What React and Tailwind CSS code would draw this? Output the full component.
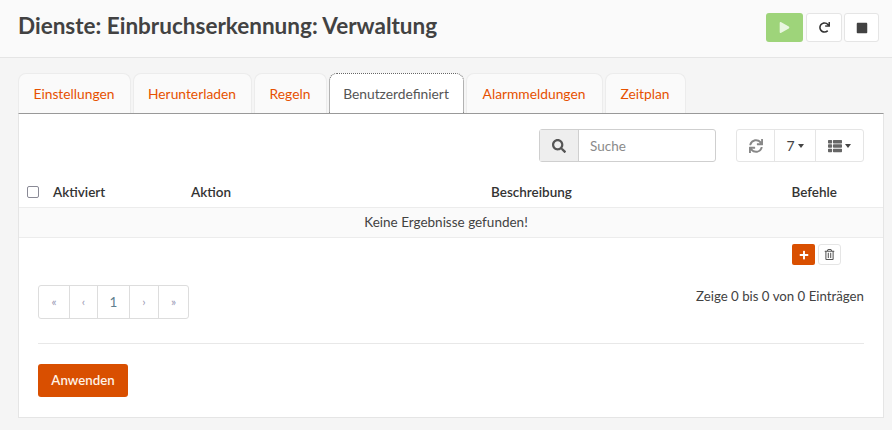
import React from "react";
import { FaPlay, FaRedo, FaStop, FaSearch, FaSync, FaThList, FaPlus, FaRegTrashAlt } from "react-icons/fa";

const tabs = [
  ["Einstellungen", "w-[113px]", false],
  ["Herunterladen", "w-[119px] ml-[2px]", false],
  ["Regeln", "w-[73px] ml-[2px]", false],
  ["Benutzerdefiniert", "w-[135px] ml-[2px]", true],
  ["Alarmmeldungen", "w-[137px] ml-[2px]", false],
  ["Zeitplan", "w-[81px] ml-[2px]", false],
];

const Caret = () => (
  <span className="ml-[3px] inline-block h-0 w-0 border-x-[3.5px] border-t-[4px] border-x-transparent border-t-[#444]" />
);

export default function App() {
  return (
    <div className="h-[430px] w-[892px] overflow-hidden bg-[#f5f5f5] font-['Lato','Liberation_Sans',sans-serif] text-[14px] text-[#424242]">
      <header className="flex h-[58px] items-start justify-between border-b border-[#e5e5e5] bg-[#fafafa] pl-[18px] pr-[13px]">
        <h1 className="mt-[11px] text-[22.5px] leading-[30px] font-bold text-[#424242]">
          Dienste: Einbruchserkennung: Verwaltung
        </h1>
        <div className="mt-[13px] flex">
          <button className="flex h-[29px] w-[37px] items-center justify-center rounded-[3px] bg-[#9ed47a] text-[#e9f6e0]">
            <FaPlay size={11} />
          </button>
          <button className="ml-[3px] flex h-[29px] w-[36px] items-center justify-center rounded-[3px] border border-[#e5e5e5] bg-white text-[#333]">
            <FaRedo size={11} />
          </button>
          <button className="ml-[2px] flex h-[29px] w-[35px] items-center justify-center rounded-[3px] border border-[#e5e5e5] bg-white text-[#424242]">
            <FaStop size={12} />
          </button>
        </div>
      </header>

      <main className="ml-[18px] mr-[8px] mt-[15px]">
        <nav className="flex h-[40px] items-stretch text-[13.8px]">
          {tabs.map(([label, w, active]) => (
            <div
              key={label}
              className={
                active
                  ? `${w} flex items-center justify-center rounded-t-[8px] border border-b-0 border-dotted border-[#666] bg-white pt-[2px] pr-[1px] text-[#555]`
                  : `${w} flex items-center justify-center rounded-t-[8px] border border-b-0 border-[#ececec] bg-[#fafafa] pt-[2px] pr-[1px] text-[#e65100]`
              }
            >
              {label}
            </div>
          ))}
        </nav>

        <section className="h-[305px] border border-t-[#999] border-x-[#e5e5e5] border-b-[#e5e5e5] bg-white">
          <div className="flex justify-end pr-[19px] pt-[15px]">
            <div className="flex h-[33px] w-[177px] rounded-[3px] border border-[#cfcfcf]">
              <span className="flex w-[39px] items-center justify-center border-r border-[#cfcfcf] bg-[#eee] text-[#555]">
                <FaSearch size={14} />
              </span>
              <span className="flex items-center pl-[11px] pt-[2px] text-[13.5px] text-[#8a8a8a]">Suche</span>
            </div>
            <div className="ml-[20px] flex h-[33px] w-[128px] rounded-[3px] border border-[#e5e5e5] text-[#444]">
              <span className="flex w-[38px] items-center justify-center border-r border-[#e5e5e5] text-[#888]">
                <FaSync size={14} />
              </span>
              <span className="flex w-[41px] items-center justify-center border-r border-[#e5e5e5]">
                7<Caret />
              </span>
              <span className="flex flex-1 items-center justify-center text-[#666]">
                <FaThList size={14} />
                <Caret />
              </span>
            </div>
          </div>

          <div className="mt-[15px] grid h-[31px] grid-cols-[34px_138px_413px_1fr] items-center border-b border-[#ececec] text-[13.5px] font-semibold text-[#333]">
            <span className="pl-[8px]">
              <span className="block h-[12px] w-[12px] rounded-[2px] border border-[#8a8a96] bg-white" />
            </span>
            <span>Aktiviert</span>
            <span>Aktion</span>
            <span className="flex justify-between pr-[46px]">
              <span className="ml-[-113px]">Beschreibung</span>
              <span>Befehle</span>
            </span>
          </div>

          <div className="flex h-[30px] items-center justify-center border-b border-[#ececec] bg-[#fafafa] pr-[10px] text-[13.5px]">
            Keine Ergebnisse gefunden!
          </div>

          <div className="mt-[6px] flex justify-end gap-[3px] pr-[42px]">
            <button className="flex h-[21px] w-[23px] items-center justify-center rounded-[2px] bg-[#d94f00] text-white">
              <FaPlus size={10} />
            </button>
            <button className="flex h-[21px] w-[23px] items-center justify-center rounded-[3px] border border-[#e5e5e5] bg-white text-[#555]">
              <FaRegTrashAlt size={11} />
            </button>
          </div>

          <div className="mt-[20px] flex items-start justify-between px-[19px]">
            <div className="flex h-[34px] w-[151px] rounded-[3px] border border-[#ddd] text-[12px] text-[#9a9ab5]">
              <span className="flex w-[31px] items-center justify-center border-r border-[#ddd]">«</span>
              <span className="flex w-[28px] items-center justify-center border-r border-[#ddd]">‹</span>
              <span className="flex w-[32px] items-center justify-center border-r border-[#ddd] text-[13.5px] text-[#5f7f8f]">1</span>
              <span className="flex w-[29px] items-center justify-center border-r border-[#ddd]">›</span>
              <span className="flex flex-1 items-center justify-center">»</span>
            </div>
            <span className="mt-[1px] text-[13.25px] leading-[20px]">Zeige 0 bis 0 von 0 Einträgen</span>
          </div>

          <div className="mx-[19px] mt-[24px] border-t border-[#e8e8e8]" />

          <button className="ml-[19px] mt-[20px] h-[33px] w-[90px] rounded-[3px] bg-[#d94f00] pt-[1px] text-[13.25px] font-semibold text-[#fff3e8]">
            Anwenden
          </button>
        </section>
      </main>
    </div>
  );
}
